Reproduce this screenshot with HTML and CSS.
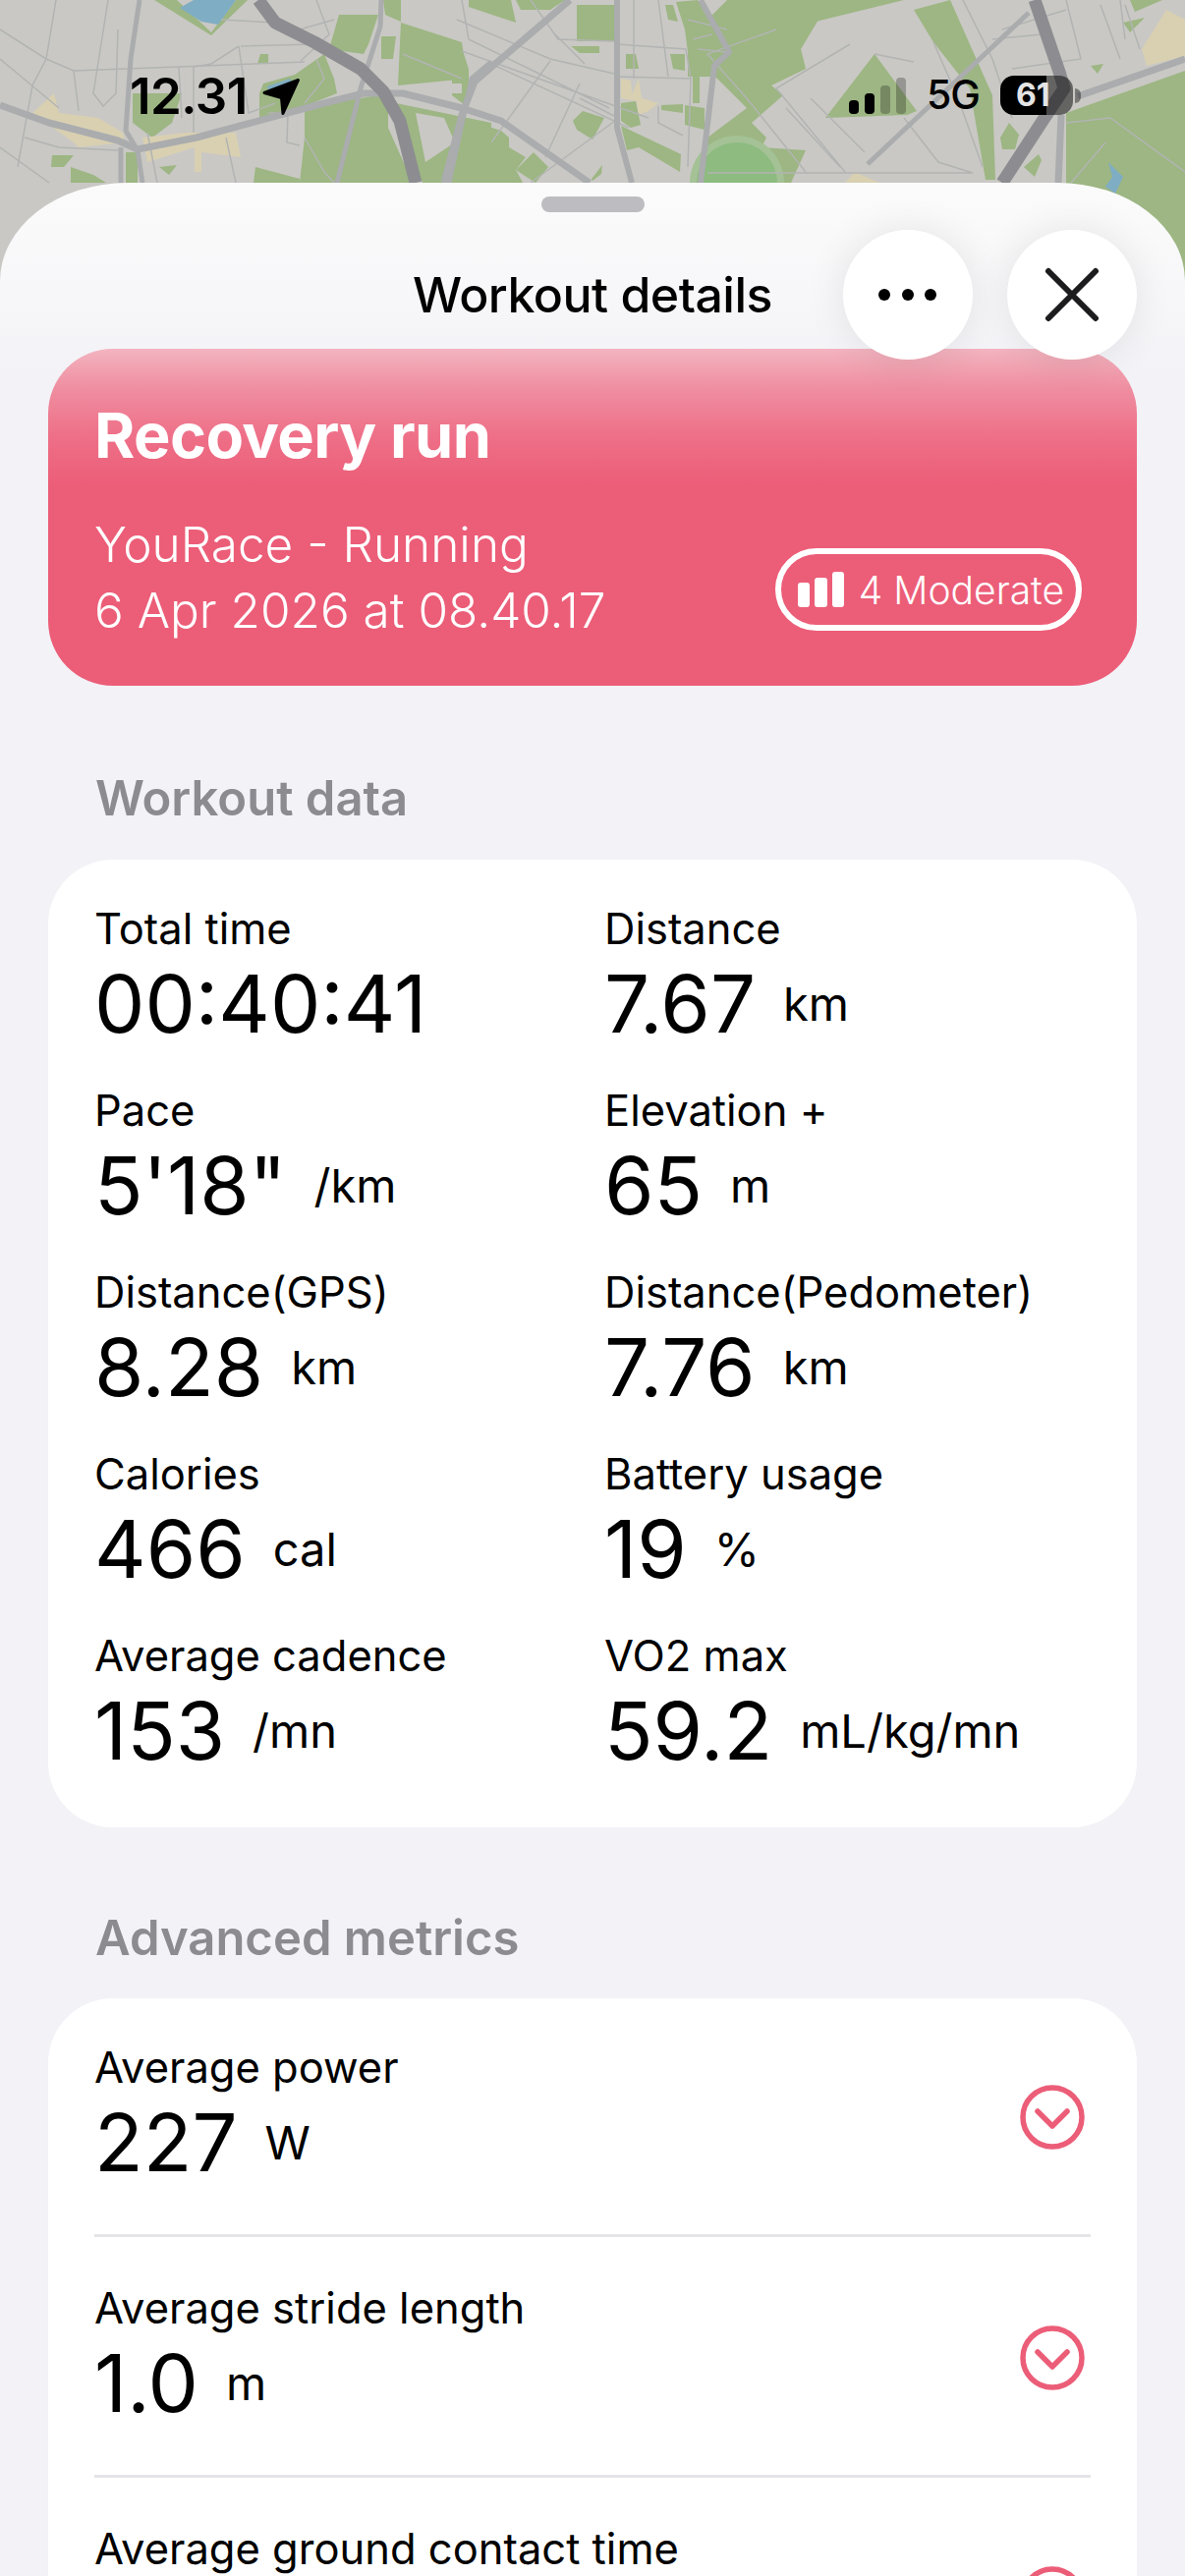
FILE: index.html
```html
<!DOCTYPE html>
<html lang="en">
<head>
  <meta charset="UTF-8">
  <meta name="viewport" content="width=device-width, initial-scale=1.0">
  <title>Workout details</title>
  <link rel="stylesheet" href="styles.css">
</head>
<body>
  <svg class="map" viewBox="0 0 1206 300" width="1206" height="300">
    <g class="map-green">
      <polygon points="157,0 180,0 215,33 240,0 252,0 215,36"/>
      <polygon points="265,55 273,55 273,65 262,65"/>
      <polygon points="268,85 300,76 330,55 340,80 343,95 305,110 264,120 264,95"/>
      <polygon points="135,95 185,95 175,125 155,140 135,125"/>
      <polygon points="310,110 395,95 395,130 420,186 340,186 305,186 310,140"/>
      <polygon points="345,15 385,15 375,45 370,55 335,50"/>
      <polygon points="408,23 470,43 476,80 405,87"/>
      <polygon points="388,37 403,37 400,60 388,60"/>
      <polygon points="390,0 408,0 408,22 392,15"/>
      <polygon points="403,105 500,125 500,186 430,186 405,130"/>
      <polygon points="53,158 75,158 65,170 52,170"/>
      <polygon points="72,170 95,178 108,186 72,186"/>
      <polygon points="162,170 180,168 172,178"/>
      <polygon points="260,170 305,182 305,186 258,186"/>
      <polygon points="128,155 140,155 140,186 128,186"/>
      <polygon points="477,0 520,0 525,23 477,7"/>
      <polygon points="525,0 575,0 560,10 530,10"/>
      <polygon points="587,5 625,5 625,42 587,42"/>
      <polygon points="581,47 610,47 610,54 590,54"/>
      <polygon points="637,55 647,55 650,70 637,70"/>
      <polygon points="682,55 697,55 697,72 685,70"/>
      <polygon points="677,5 685,5 690,22 680,20"/>
      <polygon points="688,2 710,0 740,50 730,52 737,65 727,78 700,78 700,53 697,30"/>
      <polygon points="705,78 712,78 712,105 705,105"/>
      <polygon points="697,107 717,110 717,132 697,127"/>
      <polygon points="673,107 695,106 695,115 673,112"/>
      <polygon points="632,105 647,103 652,127 642,130 632,123"/>
      <polygon points="632,128 693,157 692,175 667,160 650,150 638,153"/>
      <polygon points="583,123 593,113 615,120 603,142 587,132"/>
      <polygon points="460,137 470,120 510,133 518,140 518,150 535,160 525,173 532,186 460,186"/>
      <polygon points="543,155 558,170 545,186 525,173"/>
      <polygon points="602,182 613,168 612,177 603,184"/>
      <polygon points="460,42 468,43 477,70 477,97 473,107 460,97"/>
      <polygon points="740,0 830,0 833,20 815,50 820,70 785,87 797,97 765,125 780,140 775,150 820,153 805,186 720,186 720,140 760,110 735,85 720,70 720,20"/>
      <polygon points="830,22 920,0 830,0"/>
      <polygon points="840,120 890,55 933,113 923,117"/>
      <polygon points="930,10 967,0 1010,97 1013,183 1003,183 987,90 950,43"/>
      <polygon points="1018,140 1027,125 1037,137 1033,152 1020,152"/>
      <polygon points="1042,170 1057,157 1060,163 1053,180"/>
      <polygon points="1110,67 1123,65 1117,75"/>
      <polygon points="1143,23 1165,18 1150,33"/>
      <polygon points="1085,115 1206,72 1206,300 1085,300"/>
      <polygon points="1150,0 1183,0 1155,12"/>
    </g>
    <circle class="map-ring" cx="750" cy="186" r="48"/>
    <circle class="map-circle" cx="750" cy="186" r="41"/>
    <g class="map-grey">
      <polygon points="423,115 452,120 463,145 433,165"/>
      <rect x="460" y="85" width="10" height="10"/>
    </g>
    <g class="map-sand">
      <polygon points="33,115 55,95 60,115 100,120 125,135 127,145 80,150 75,145"/>
      <polygon points="145,140 190,135 240,135 245,160 205,155 205,175 198,175 198,150 150,165"/>
      <polygon points="632,80 642,82 643,96 650,80 653,100 670,105 660,113 650,117 648,103 632,100"/>
      <polygon points="1162,50 1187,10 1206,20 1206,57 1167,67"/>
      <polygon points="860,186 870,175 895,186"/>
    </g>
    <g class="map-water">
      <polygon points="183,8 197,0 240,0 222,25 205,22"/>
      <polygon points="272,88 295,80 300,86 274,95"/>
      <polygon points="1128,165 1143,180 1135,197 1125,190 1132,180"/>
    </g>
    <g class="map-minor">
      <path d="M0 30L47 60L75 72L182 68L310 63"/>
      <path d="M57 0L47 60L33 87L18 170"/>
      <path d="M75 72L80 113M110 0L95 95L105 108L118 95L120 30"/>
      <path d="M182 68L185 120M197 68L197 135M243 47L253 115L280 105M243 47L215 65L197 68"/>
      <path d="M0 60L30 85L60 110M0 150L50 186M25 140L60 150L120 153M150 135L160 186M230 140L240 186"/>
      <path d="M273 115L293 115L292 145L305 148M310 105L330 80L322 60M306 62L335 35L322 0"/>
      <path d="M305 30L340 20M225 20L280 23M320 45L245 47"/>
      <path d="M310 140L330 175L340 186M410 55L470 80"/>
      <path d="M470 0L477 40L620 110M465 20L560 60L625 75M470 52L660 120M500 65L640 130"/>
      <path d="M560 62L500 145M590 85L555 160M630 120L540 186M565 35L595 65M590 100L625 118"/>
      <path d="M628 45L698 50L703 80L628 78M645 0L645 80M670 0L680 78M703 80L700 170M670 108L670 125L695 138"/>
      <path d="M540 0L568 40L625 42M700 20L740 30M705 40L725 35M710 50L740 53"/>
      <path d="M790 30L720 55L760 100L820 175M865 45L790 90L860 175M800 110L855 170M825 100L880 155M890 55L930 63M920 120L955 165L990 176L720 176"/>
      <path d="M950 43L975 100L1000 170M980 0L1010 60L1030 120M1010 40L1060 35M1030 70L1100 60L1085 0M1120 5L1140 60M1145 5L1160 50M1020 30L1085 10"/>
      <path d="M1085 125L1130 120L1206 175M1125 145L1090 186M1140 0L1145 40"/>
    </g>
    <g class="map-road">
      <path d="M142 0L133 60L128 133L140 153L145 186" stroke-width="5"/>
      <path d="M388 0L387 27L367 90L343 186" stroke-width="5"/>
      <path d="M500 63L480 80L457 186" stroke-width="5"/>
      <path d="M123 150L123 186" stroke-width="5"/>
      <path d="M1047 13L883 167" stroke-width="5"/>
      <path d="M628 0L628 130L643 186" stroke-width="6"/>
      <path d="M713 0L742 53L727 67L713 186" stroke-width="6"/>
      <path d="M580 0L483 83L470 117L452 186" stroke-width="7"/>
      <path d="M1080 117L1077 186" stroke-width="7"/>
      <path d="M1097 98L1206 60" stroke-width="7"/>
      <path d="M0 107L50 125L120 143L140 152L200 140L330 105L370 95L410 95L470 110L510 123L537 142L600 186" stroke-width="7"/>
    </g>
    <g class="map-highway">
      <path d="M263 0L280 23L320 43L367 70L390 93L407 123L423 186"/>
      <path d="M1053 0L1078 73L1083 90L1063 120L1020 186"/>
    </g>
  </svg>

  <div class="status-bar">
    <div class="status-left">
      <span class="status-time">12.31</span>
      <svg class="status-arrow" viewBox="0 0 40 40" width="40" height="40">
        <path d="M37.500 2.500L3 15.500L20.500 20.500L22 36.500Z"/>
      </svg>
    </div>
    <div class="status-right">
      <div class="signal">
        <span class="signal-bar signal-1"></span>
        <span class="signal-bar signal-2"></span>
        <span class="signal-bar signal-3 signal-off"></span>
        <span class="signal-bar signal-4 signal-off"></span>
      </div>
      <span class="status-net">5G</span>
      <div class="battery">61</div>
      <span class="battery-nub"></span>
    </div>
  </div>

  <div class="sheet">
    <div class="grabber"></div>
    <div class="sheet-header">
      <span></span>
      <h1 class="sheet-title">Workout details</h1>
      <div class="sheet-actions">
        <div class="round-btn">
          <svg viewBox="0 0 64 20" width="64" height="20"><circle cx="8" cy="10" r="6"/><circle cx="32" cy="10" r="6"/><circle cx="55" cy="10" r="6"/></svg>
        </div>
        <div class="round-btn">
          <svg viewBox="0 0 56 56" width="56" height="56"><path class="close-x" d="M4 4L52 52M52 4L4 52"/></svg>
        </div>
      </div>
    </div>

    <div class="hero">
      <h2 class="hero-title">Recovery run</h2>
      <div class="hero-foot">
        <div class="hero-sub">YouRace - Running<br>6 Apr 2026 at 08.40.17</div>
        <div class="effort">
          <svg viewBox="0 0 47 36" width="47" height="36"><rect x="0" y="11" width="12" height="25" rx="3"/><rect x="17" y="6" width="13" height="30" rx="3"/><rect x="35" y="0" width="12" height="36" rx="3"/></svg>
          <span>4 Moderate</span>
        </div>
      </div>
    </div>

    <h3 class="section-title">Workout data</h3>
    <div class="card data-grid">
      <div class="metric"><div class="metric-label">Total time</div><div class="metric-value">00:40:41</div></div>
      <div class="metric"><div class="metric-label">Distance</div><div class="metric-value">7.67<span class="unit">km</span></div></div>
      <div class="metric"><div class="metric-label">Pace</div><div class="metric-value">5'18"<span class="unit">/km</span></div></div>
      <div class="metric"><div class="metric-label">Elevation +</div><div class="metric-value">65<span class="unit">m</span></div></div>
      <div class="metric"><div class="metric-label">Distance(GPS)</div><div class="metric-value">8.28<span class="unit">km</span></div></div>
      <div class="metric"><div class="metric-label">Distance(Pedometer)</div><div class="metric-value">7.76<span class="unit">km</span></div></div>
      <div class="metric"><div class="metric-label">Calories</div><div class="metric-value">466<span class="unit">cal</span></div></div>
      <div class="metric"><div class="metric-label">Battery usage</div><div class="metric-value">19<span class="unit">%</span></div></div>
      <div class="metric"><div class="metric-label">Average cadence</div><div class="metric-value">153<span class="unit">/mn</span></div></div>
      <div class="metric"><div class="metric-label">VO2 max</div><div class="metric-value">59.2<span class="unit">mL/kg/mn</span></div></div>
    </div>

    <h3 class="section-title">Advanced metrics</h3>
    <div class="card advanced">
      <div class="adv-row">
        <div class="metric"><div class="metric-label">Average power</div><div class="metric-value">227<span class="unit">W</span></div></div>
        <svg class="chevron" viewBox="0 0 66 66" width="66" height="66"><circle cx="33" cy="33" r="30"/><path d="M18 27L33 42L48 27"/></svg>
      </div>
      <div class="adv-row">
        <div class="metric"><div class="metric-label">Average stride length</div><div class="metric-value">1.0<span class="unit">m</span></div></div>
        <svg class="chevron" viewBox="0 0 66 66" width="66" height="66"><circle cx="33" cy="33" r="30"/><path d="M18 27L33 42L48 27"/></svg>
      </div>
      <div class="adv-row">
        <div class="metric"><div class="metric-label">Average ground contact time</div><div class="metric-value"></div></div>
        <svg class="chevron" viewBox="0 0 66 66" width="66" height="66"><circle cx="33" cy="33" r="30"/><path d="M18 27L33 42L48 27"/></svg>
      </div>
    </div>
  </div>
</body>
</html>
```

FILE: styles.css
```css
html {
  width: 1206px;
  height: 2622px;
  overflow: hidden;
}

body {
  position: relative;
  width: 1206px;
  height: 2622px;
  margin: 0;
  overflow: hidden;
  background: #c9c8c4;
  font-family: Inter, "Liberation Sans", sans-serif;
  color: #000;
}

h1, h2, h3 {
  margin: 0;
}

/* map behind the sheet */
.map {
  position: absolute;
  top: 0;
  left: 0;
  filter: blur(.5px);
}

.map-green { fill: #9db683; }
.map-grey { fill: #c9c8c4; }
.map-sand { fill: #d9d0b2; }
.map-water { fill: #7fadc4; }
.map-ring { fill: #a4c295; }
.map-circle { fill: #8dbb80; }

.map-minor {
  fill: none;
  stroke: #b2b4b3;
  stroke-width: 1.5;
}

.map-road {
  fill: none;
  stroke: #aaacae;
  stroke-linejoin: round;
}

.map-highway {
  fill: none;
  stroke: #8d8d91;
  stroke-width: 13;
  stroke-linejoin: round;
}

/* status bar */
.status-bar {
  position: relative;
  box-sizing: border-box;
  display: flex;
  justify-content: space-between;
  height: 186px;
  padding: 78px 106px 0 132px;
}

.status-left {
  display: flex;
  align-items: flex-start;
  gap: 14px;
}

.status-time {
  font-size: 51px;
  line-height: 40px;
  font-weight: 600;
  letter-spacing: -.5px;
}

.status-arrow {
  margin-top: 1px;
}

.status-arrow path {
  stroke: #000;
  stroke-width: 3;
  stroke-linejoin: round;
}

.status-right {
  display: flex;
  align-items: flex-start;
}

.signal {
  display: flex;
  align-items: flex-end;
  gap: 6px;
  height: 37px;
  margin-top: 1px;
}

.signal-bar {
  width: 10px;
  border-radius: 4px;
  background: #000;
}

.signal-1 { height: 14px; }
.signal-2 { height: 21px; }
.signal-3 { height: 29px; }
.signal-4 { height: 37px; }
.signal-off { background: rgba(0, 0, 0, .25); }

.status-net {
  margin-left: 21px;
  font-size: 41px;
  line-height: 36px;
  font-weight: 500;
  letter-spacing: -1px;
}

.battery {
  box-sizing: border-box;
  width: 74px;
  height: 40px;
  margin: -1px 0 0 21px;
  padding-left: 16px;
  border-radius: 14px;
  background: linear-gradient(90deg, #000 64%, rgba(0, 0, 0, .5) 64%);
  color: #e4e4e4;
  font-size: 32px;
  line-height: 40px;
  font-weight: 700;
}

.battery-nub {
  width: 6px;
  height: 15px;
  margin: 12px 0 0 2px;
  border-radius: 0 6px 6px 0;
  background: rgba(0, 0, 0, .4);
}

/* sheet */
.sheet {
  position: relative;
  box-sizing: border-box;
  height: 2436px;
  padding: 14px 49px 0;
  border-radius: 130px 130px 0 0 / 100px 100px 0 0;
  background: linear-gradient(180deg, #fbfbfb 0, #f7f7f9 120px, #f2f2f7 200px);
}

.grabber {
  width: 105px;
  height: 16px;
  margin: 0 auto;
  border-radius: 8px;
  background: #bdbdc1;
}

.sheet-header {
  position: relative;
  z-index: 1;
  display: grid;
  grid-template-columns: 1fr auto 1fr;
  align-items: center;
  margin: 18px 0 -11px;
}

.sheet-title {
  font-size: 50px;
  line-height: 60px;
  font-weight: 500;
  letter-spacing: -.5px;
}

.sheet-actions {
  display: flex;
  justify-content: flex-end;
  gap: 35px;
}

.round-btn {
  display: flex;
  align-items: center;
  justify-content: center;
  width: 132px;
  height: 132px;
  border-radius: 50%;
  background: #fff;
  box-shadow: 0 0 40px rgba(0, 0, 0, .09);
}

.close-x {
  fill: none;
  stroke: #1c1c1e;
  stroke-width: 6;
  stroke-linecap: round;
}

/* hero */
.hero {
  box-sizing: border-box;
  height: 343px;
  padding: 50px 56px 0 47px;
  border-radius: 66px;
  background: linear-gradient(180deg, #f3b4c0 0, #ef8ea1 40px, #ee6f87 90px, #ec5d78 140px);
  color: #fff;
}

.hero-title {
  font-size: 63px;
  line-height: 76px;
  font-weight: 700;
  letter-spacing: -.6px;
}

.hero-foot {
  display: flex;
  justify-content: space-between;
  align-items: flex-end;
  margin-top: 40px;
}

.hero-sub {
  font-size: 49.5px;
  line-height: 67px;
  font-weight: 300;
}

.effort {
  box-sizing: border-box;
  display: flex;
  align-items: center;
  gap: 15px;
  height: 84px;
  margin-bottom: 13px;
  padding: 0 12px 0 17px;
  border: 6px solid #fff;
  border-radius: 42px;
  font-size: 39px;
  font-weight: 300;
}

.effort svg {
  fill: #fff;
}

/* sections */
.section-title {
  margin: 85px 0 32px 48px;
  font-size: 49px;
  line-height: 60px;
  font-weight: 600;
  color: #8b8b90;
}

.card + .section-title {
  margin: 83px 0 31px 48px;
}

.card {
  border-radius: 66px;
  background: #fff;
}

.data-grid {
  display: grid;
  grid-template-columns: 519px 1fr;
  row-gap: 31px;
  padding: 44px 0 47px 47px;
}

.metric-label {
  font-size: 43.5px;
  line-height: 52px;
  white-space: nowrap;
}

.metric-value {
  display: flex;
  align-items: center;
  min-height: 102px;
  font-size: 81.5px;
  line-height: 102px;
  white-space: nowrap;
}

.unit {
  margin-left: 28px;
  font-size: 47px;
}

/* advanced rows */
.advanced {
  height: 700px;
  padding: 0 47px 0 47px;
}

.adv-row {
  display: flex;
  justify-content: space-between;
  align-items: center;
  padding: 46px 6px 42px 0;
  border-bottom: 3px solid #e5e5e8;
}

.adv-row:first-child {
  padding-top: 44px;
}

.chevron {
  fill: none;
  stroke: #ec5d78;
  stroke-width: 5.5;
  stroke-linecap: round;
  stroke-linejoin: round;
}
```
